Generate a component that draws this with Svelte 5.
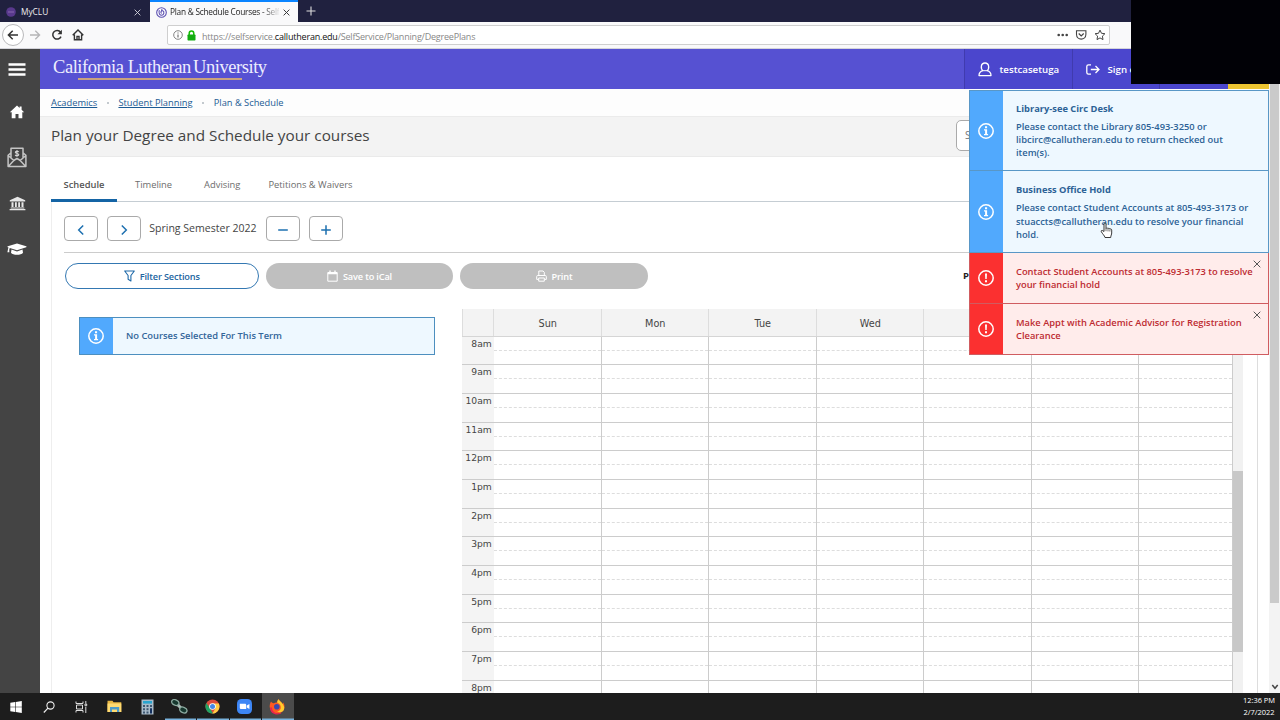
<script>
  const days = ['Sun', 'Mon', 'Tue', 'Wed', '', '', ''];
  const hours = ['8am', '9am', '10am', '11am', '12pm', '1pm', '2pm', '3pm', '4pm', '5pm', '6pm', '7pm', '8pm'];
  const notices = [
    { kind: 'info', height: 81, title: 'Library-see Circ Desk', lines: ['Please contact the Library 805-493-3250 or', 'libcirc@callutheran.edu to return checked out', 'item(s).'] },
    { kind: 'info', height: 82, title: 'Business Office Hold', lines: ['Please contact Student Accounts at 805-493-3173 or', 'stuaccts@callutheran.edu to resolve your financial', 'hold.'] },
    { kind: 'error', height: 51, lines: ['Contact Student Accounts at 805-493-3173 to resolve', 'your financial hold'] },
    { kind: 'error', height: 51, lines: ['Make Appt with Academic Advisor for Registration', 'Clearance'] }
  ];
</script>

{#snippet infoIcon()}
  <svg width="18" height="18" viewBox="0 0 18 18"><circle cx="9" cy="9" r="7.2" fill="none" stroke="#fff" stroke-width="1.5" /><path d="M8 4.3h2.1v2H8zM7 7.3h3.1v4.6h1v1.3H7v-1.3h1.1V8.6H7z" fill="#fff" /></svg>
{/snippet}
{#snippet errorIcon()}
  <svg width="18" height="18" viewBox="0 0 18 18"><circle cx="9" cy="9" r="7.2" fill="none" stroke="#fff" stroke-width="1.5" /><path d="M8 4.4h2l-.3 5.6H8.3zM8 11.2h2v2H8z" fill="#fff" /></svg>
{/snippet}
{#snippet cross(size, color, w)}
  <svg width={size} height={size} viewBox="0 0 8 8"><path d="M.7.7l6.6 6.6M7.3.7L.7 7.3" stroke={color} stroke-width={w} fill="none" /></svg>
{/snippet}

<div class="screen">
  <div class="tabbar">
    <div class="tab">
      <svg width="10" height="10" viewBox="0 0 10 10"><circle cx="5" cy="5" r="4.8" fill="#59398d" /><path d="M2 5h6" stroke="#8a69b0" /></svg>
      <span class="t1">MyCLU</span>
      {@render cross(7, '#d9d9e2', 1)}
    </div>
    <div class="tab active">
      <svg width="11" height="11" viewBox="0 0 11 11"><circle cx="5.5" cy="5.5" r="4.8" fill="#fff" stroke="#5b4fb0" stroke-width="1.1" /><path d="M3.3 3.2c-.9 3.3.4 5 2.4 5 2.3 0 3-3.6 1.1-4.4-1.5-.5-2.7 1.8-1.2 2.6M6 2.2l-.5 2" stroke="#5b4fb0" stroke-width="1.1" fill="none" /></svg>
      <span class="t2">Plan &amp; Schedule Courses - Self</span>
      {@render cross(7, '#333', 1.1)}
    </div>
    <svg class="plus" width="10" height="10" viewBox="0 0 10 10"><path d="M5 .5v9M.5 5h9" stroke="#ddd" stroke-width="1.1" /></svg>
  </div>

  <div class="toolbar">
    <div class="back"><svg width="12" height="12" viewBox="0 0 12 12"><path d="M11 6H1.5M5.7 1.7L1.4 6l4.3 4.3" stroke="#333" stroke-width="1.5" fill="none" /></svg></div>
    <svg class="fwd" width="12" height="12" viewBox="0 0 12 12"><path d="M1 6h9.5M6.3 1.7L10.6 6l-4.3 4.3" stroke="#b5b5b7" stroke-width="1.3" fill="none" /></svg>
    <svg class="reload" width="12" height="12" viewBox="0 0 12 12"><path d="M9.6 3.3A4.3 4.3 0 1 0 10 7.6" stroke="#333" stroke-width="1.5" fill="none" /><path d="M10.9.8v4.4H6.5z" fill="#333" /></svg>
    <svg class="homeb" width="12" height="12" viewBox="0 0 12 12"><path d="M.7 6.3L6 1l5.3 5.3M2.4 5.5v5.3h7.2V5.5M5 10.8V7.4h2v3.4" stroke="#333" stroke-width="1.4" fill="none" /></svg>
    <div class="urlbar">
      <svg width="10" height="10" viewBox="0 0 10 10"><circle cx="5" cy="5" r="4.3" fill="none" stroke="#777" stroke-width=".9" /><path d="M5 4.4v3M5 2.4v1.1" stroke="#666" stroke-width="1.1" /></svg>
      <svg class="lock" width="9" height="11" viewBox="0 0 9 11"><path d="M2.2 5V3.4a2.3 2.3 0 0 1 4.6 0V5" fill="none" stroke="#12bc00" stroke-width="1.5" /><rect x=".5" y="4.6" width="8" height="5.8" rx=".7" fill="#12ac10" /></svg>
      <span class="url">https://selfservice.<b>callutheran.edu</b>/SelfService/Planning/DegreePlans</span>
      <svg class="urlicons" width="48" height="12" viewBox="0 0 48 12"><g fill="#444"><circle cx="1.7" cy="6" r="1.3" /><circle cx="5.7" cy="6" r="1.3" /><circle cx="9.7" cy="6" r="1.3" /></g><path d="M19.5 1.7h9.4v3.6c0 6.4-9.4 6.4-9.4 0z" fill="none" stroke="#444" stroke-width="1.1" /><path d="M21.7 4.5l2.5 2.4 2.5-2.4" fill="none" stroke="#444" stroke-width="1.2" /><path d="M43 1.1l1.5 3.2 3.4.4-2.5 2.4.6 3.5-3-1.7-3 1.7.6-3.5-2.5-2.4 3.4-.4z" fill="none" stroke="#444" stroke-width="1" /></svg>
    </div>
  </div>

  <div class="page">
    <nav class="side">
      <svg width="18" height="14" viewBox="0 0 18 14"><path d="M.5 1.500h17M.5 6.500h17M.5 11.500h17" stroke="#fff" stroke-width="2.3" /></svg>
      <svg class="s1" width="16" height="14" viewBox="0 0 16 14"><path d="M8 .5L.8 7.2h1.9v6h3.8V9h3v4.2h3.8v-6h1.9l-2.6-2.4V1.4h-2v1.5z" fill="#fff" /></svg>
      <svg class="s2" width="20" height="21" viewBox="0 0 20 21"><path d="M4 11V1.2h12V11M4 5.8L1.1 8.3v11.2h17.8V8.3L16 5.8M1.4 8.8l5.4 4.7L10 11.4l3.2 2.1 5.4-4.7M1.5 19.2l5.3-5.7M18.5 19.2l-5.3-5.7" fill="none" stroke="#c4c4c4" stroke-width="1.5" stroke-linejoin="round" /><path d="M11.8 4.8c-1-.9-3.5-.8-3.5.5 0 1.600 3.500.7 3.500 2.300 0 1.400-2.700 1.400-3.700.4M10 3v6.700" fill="none" stroke="#d5d5d5" stroke-width="1.100" /></svg>
      <svg class="s3" width="17" height="15" viewBox="0 0 17 15"><path d="M8.500.8L.8 4.200v1.200h15.400V4.200zM2.500 6.300h2V11h-2zM6 6.300h1.800V11H6zM9.200 6.300H11V11H9.200zM12.500 6.300h2V11h-2zM1.700 11.500h13.600v.9H1.700zM.6 13h15.800v1.200H.6z" fill="#e8e8e8" /></svg>
      <svg class="s4" width="20" height="13" viewBox="0 0 20 13"><path d="M10 .4L.8 3.300c-.5.2-.5.8 0 1l.8.3C1 5.600 1 7 .4 9.200h2C2.200 7 2.300 6 2.800 5l7.200 2.200 9.200-2.900c.5-.2.5-.8 0-1zM4.500 6.600L4 9.800c1.800 2.700 10.200 2.700 12 0l-.5-3.200L10 8.400z" fill="#fff" /></svg>
    </nav>

    <div class="body">
      <header>
        <div class="logo"><span>California Lutheran <b>University</b></span><i></i></div>
        <div class="user">
          <svg width="14" height="15" viewBox="0 0 14 15"><path d="M5 8.700C2.500 7 2.500 1 7 1s4.500 6 2 7.700M5 8.700c-2.500.6-4 1.800-4 4.900h12c0-3.100-1.500-4.300-4-4.900" fill="none" stroke="#fff" stroke-width="1.300" stroke-linejoin="round" /><path d="M5 8.700h4" stroke="#fff" stroke-width="1" /></svg>
          <span>testcasetuga</span>
        </div>
        <div class="sign">
          <svg width="14" height="11" viewBox="0 0 14 11"><path d="M5 .8H2.500C1.300.8.800 1.400.800 2.500v6c0 1.100.5 1.700 1.700 1.700H5M4.800 5.500H13M9.500 2l3.500 3.500L9.500 9" fill="none" stroke="#fff" stroke-width="1.300" /></svg>
          <span>Sign out</span>
        </div>
        <div class="help"></div>
        <div class="alerts"></div>
      </header>

      <div class="crumbs"><u>Academics</u><em></em><u>Student Planning</u><em></em><span>Plan &amp; Schedule</span></div>
      <div class="title"><h1>Plan your Degree and Schedule your courses</h1><div class="search">S</div></div>

      <div class="tabs">
        <div class="on"><span>Schedule</span></div>
        <div class="tb2"><span>Timeline</span></div>
        <div class="tb3"><span>Advising</span></div>
        <div class="tb4"><span>Petitions &amp; Waivers</span></div>
      </div>

      <main>
        <div class="term">
          <button aria-label="Previous term"><svg width="8" height="12" viewBox="0 0 8 12"><path d="M6.200 1.500L1.700 6l4.500 4.500" /></svg></button>
          <button aria-label="Next term"><svg width="8" height="12" viewBox="0 0 8 12"><path d="M1.800 1.500L6.300 6l-4.500 4.500" /></svg></button>
          <span>Spring Semester 2022</span>
          <button aria-label="Remove term"><svg width="12" height="12" viewBox="0 0 12 12"><path d="M1.200 6h9.600" /></svg></button>
          <button aria-label="Add term"><svg width="12" height="12" viewBox="0 0 12 12"><path d="M1.200 6h9.600M6 1.200v9.600" /></svg></button>
        </div>
        <div class="actions">
          <div class="pill outline"><svg width="11" height="12" viewBox="0 0 11 12"><path d="M.7 1h9.600L6.900 5.500v5.400L4.100 9.300V5.500z" fill="none" stroke="#1d68a8" stroke-width="1.100" stroke-linejoin="round" /></svg><span>Filter Sections</span></div>
          <div class="pill grey g1"><svg width="11" height="12" viewBox="0 0 11 12"><path d="M.8 2.500h9.400v8.700H.8z" fill="none" stroke="#fff" stroke-width="1" /><path d="M.8 3.500h9.400M3 .5v2.700M8 .5v2.700" stroke="#fff" stroke-width="1.400" /></svg><span>Save to iCal</span></div>
          <div class="pill grey g2"><svg width="11" height="12" viewBox="0 0 11 12"><path d="M2.800 5.500V1h4.200l1.300 1.300v3.200M2.500 9.400H.7V6.500c0-.6.300-1 1-1h7.600c.7 0 1 .4 1 1v2.900H8.500M2.700 8h5.600v3.200H2.700z" fill="none" stroke="#fff" stroke-width="1" /></svg><span>Print</span></div>
          <strong>P</strong>
        </div>
        <div class="cols">
          <div class="none"><div class="ico">{@render infoIcon()}</div><span>No Courses Selected For This Term</span></div>
          <div class="cal">
            <div class="head"><div class="corner"></div>{#each days as d}<div class="day"><span>{d}</span></div>{/each}<div class="gut"></div></div>
            <div class="grid">
              <div class="rows">
                {#each hours as h}
                  <div class="row"><div class="hr"><span>{h}</span></div>{#each days as d}<div class="cell"><i></i></div>{/each}</div>
                {/each}
              </div>
              <div class="cscroll"><div></div></div>
            </div>
          </div>
        </div>
      </main>
    </div>
    <div class="pscroll"><div></div><svg width="8" height="6" viewBox="0 0 8 6"><path d="M1.300 1L4 4.300 6.700 1" fill="none" stroke="#444" stroke-width="1.500" /></svg></div>
  </div>

  <footer>
    <div class="app"><svg width="12" height="12" viewBox="0 0 12 12"><path d="M.3 1.800L5.200 1v4.700H.3zM5.800.9L11.800 0v5.700h-6zM.3 6.300h4.900V11L.3 10.200zM5.800 6.300h6V12l-6-.9z" fill="#fff" /></svg></div>
    <div class="app"><svg width="12" height="12" viewBox="0 0 12 12"><circle cx="7.500" cy="4.500" r="3.600" fill="none" stroke="#eee" stroke-width="1.100" /><path d="M5 7.200L.8 11.500" stroke="#eee" stroke-width="1.200" /></svg></div>
    <div class="app"><svg width="13" height="12" viewBox="0 0 13 12"><path d="M1 .5v2h7v-2M1 11.500v-2h7v2M1.500 4h6v4h-6zM10.800 0v2.500M10.800 6v6M10 3h1.700v1.800H10z" fill="none" stroke="#ddd" stroke-width="1" /></svg></div>
    <div class="app"><svg width="15" height="13" viewBox="0 0 15 13"><path d="M.5.8h5l1 1.500h7.800V12H.5z" fill="#e9b844" /><path d="M.5 3.500h13.800V12H.5z" fill="#ffdb72" /><path d="M3 7h9.200v5H10V9.500H5V12H3z" fill="#4d9ccb" /></svg></div>
    <div class="app"><svg width="13" height="16" viewBox="0 0 13 16"><path d="M.5.5h12v15H.5z" fill="#a9bac8" /><path d="M2 2h9v2.600H2z" fill="#29a4ce" /><path d="M2 6h2v2H2zM5.500 6h2v2h-2zM2 9.300h2v2H2zM5.500 9.300h2v2h-2zM2 12.500h2v2H2zM5.500 12.500h2v2h-2zM9 6h2v2H9z" fill="#3d5770" /><path d="M9 9.300h2v5.200H9z" fill="#15315f" /></svg></div>
    <div class="app run"><svg width="17" height="15" viewBox="0 0 17 15"><path d="M4.500 3.500l8 8" stroke="#aebdb8" stroke-width="3" /><ellipse cx="4.300" cy="3.500" rx="3.800" ry="2.700" transform="rotate(25 4.300 3.500)" fill="#17382e" stroke="#8caaa0" stroke-width="1.300" /><ellipse cx="12.300" cy="11" rx="3.800" ry="2.700" transform="rotate(25 12.300 11)" fill="#17382e" stroke="#8caaa0" stroke-width="1.300" /></svg></div>
    <div class="app run"><svg width="15" height="15" viewBox="0 0 15 15"><circle cx="7.500" cy="7.500" r="7" fill="#dd4b3e" /><path d="M1.400 4L5 9.200l3 5.300A7 7 0 0 1 1.400 4z" fill="#20a363" /><path d="M7.500 4.500h6.300A7 7 0 0 1 7.400 14.500l3-5z" fill="#ffcd45" /><circle cx="7.500" cy="7.500" r="3.300" fill="#fff" /><circle cx="7.500" cy="7.500" r="2.500" fill="#4587e8" /></svg></div>
    <div class="app run"><svg width="15" height="15" viewBox="0 0 15 15"><rect width="15" height="15" rx="4.500" fill="#3d86f5" /><path d="M2.800 4.700h5c.8 0 1.400.5 1.400 1.300v4H4.300c-.9 0-1.500-.5-1.500-1.300zM9.800 6.600l2.600-1.700v5.200L9.800 8.500z" fill="#fff" /></svg></div>
    <div class="app run cur"><svg width="16" height="16" viewBox="0 0 16 16"><path d="M2 2.500c-1.300 2.500-1.600 4.600-1 7A7.500 7.500 0 0 0 15.500 8c0-2-.5-3.600-1.600-4.700.2.700.2 1.300 0 1.900C13 3.200 10.500 2.700 9.800.3c-1.400 1-1.700 2.300-1.500 3.400-1.500-.3-2.400 0-3.200.6C4 4.200 2.600 3.700 2 2.500z" fill="#ff5a20" /><path d="M9.800.3c-1.400 1-1.700 2.300-1.500 3.400 2.500.8 3.900 3 3.500 5.500-.4 2-2 3.200-3.800 3.200 2 1.400 5 1 6.500-1 1.100-2 1.200-3.300-.6-6.200C13 3.200 10.500 2.700 9.800.3z" fill="#ffcb2d" /><path d="M1 8.500c0 5 4 7 7 7 2.500 0 4-.8 5-2-5 2-10 0-10-5z" fill="#e8244f" /><circle cx="7.800" cy="7.800" r="2.800" fill="#3b49ae" /></svg></div>
    <div class="clock"><span>12:36 PM</span><span>2/7/2022</span></div>
  </footer>

  <div class="notices">
    {#each notices as n}
      <div class="notice {n.kind}" style="height:{n.height}px">
        <div class="ico">{#if n.kind === 'info'}{@render infoIcon()}{:else}{@render errorIcon()}{/if}</div>
        <div class="msg">
          {#if n.title}<h2>{n.title}</h2>{/if}
          {#each n.lines as l}<p>{l}</p>{/each}
        </div>
        {#if n.kind === 'error'}<div class="close">{@render cross(8, '#555', 1)}</div>{/if}
      </div>
    {/each}
  </div>
  <svg class="hand" width="13" height="17" viewBox="0 0 13 17"><path d="M4 9.500V2c0-1.500 2-1.500 2 0v4.500c.3-.8 1.800-.7 2 .2.500-.7 1.700-.4 1.900.4.700-.5 1.800-.1 1.800 1V11c0 1.500-.9 2.500-1 4.500H5C4.500 13.500 2.500 12 1.300 9.700.8 8.500 2 8 2.900 8.800z" fill="#fff" stroke="#222" stroke-width=".9" /><path d="M6 6.500v2.700M8 7v2.400M9.900 7.500v2" stroke="#333" stroke-width=".7" /></svg>
  <div class="cover"></div>
</div>

<style>
  :global(body) { margin: 0; overflow: hidden; }
  .screen, .screen * { box-sizing: border-box; }
  .screen { width: 1280px; height: 720px; position: relative; overflow: hidden; display: flex; flex-direction: column; background: #fff; font-family: "Open Sans", sans-serif; color: #444; white-space: nowrap; }
  svg { display: block; flex: none; }
  .tabbar { height: 22px; background: #20213f; display: flex; flex: none; align-items: center; }
  .tab { width: 150px; height: 22px; padding: 2px 9px 0 6px; display: flex; align-items: center; font-size: 8.300px; color: #eee; }
  .tab span { margin-left: 5px; flex: 1; line-height: 16px; }
  .tab.active { background: #f9f9fa; border-top: 2px solid #0a84ff; color: #222; padding: 0 8px 0 6px; width: 148px; }
  .tab .t2 { -webkit-mask-image: linear-gradient(90deg, #000 84%, transparent 102%); margin-left: 3px; margin-right: 4px; letter-spacing: -.25px; }
  .plus { margin-left: 8px; }
  .toolbar { height: 27px; background: #f9f9fa; display: flex; flex: none; align-items: center; border-bottom: 1px solid #d4d4da; padding-left: 2px; }
  .back { width: 22px; height: 22px; border: 1px solid #b9b9bb; border-radius: 50%; display: grid; place-items: center; background: #fff; }
  .fwd { margin-left: 5px; }
  .reload { margin-left: 10px; }
  .homeb { margin-left: 9px; }
  .urlbar { margin-left: 83px; width: 943px; height: 20px; border: 1px solid #cfcfcf; border-radius: 2px; background: #fff; display: flex; align-items: center; padding: 0 4px 0 5px; }
  .lock { margin-left: 4px; }
  .url { margin-left: 6px; margin-top: 2px; font-size: 9px; letter-spacing: -.2px; color: #888; flex: 1; }
  .url b { font-weight: 400; color: #111; }
  .page { flex: 1; min-height: 0; display: flex; }
  .side { width: 40px; background: #444; display: flex; flex-direction: column; align-items: center; padding: 14px 6px 0 0; flex: none; }
  .s1 { margin-top: 28px; } .s2 { margin-top: 28px; } .s3 { margin-top: 28px; } .s4 { margin-top: 32px; }
  .body { width: 1229px; display: flex; flex-direction: column; min-height: 0; flex: none; }
  header { height: 40px; background: #5651d2; display: flex; flex: none; color: #fff; font-size: 9.700px; font-weight: 600; }
  .logo { width: 924px; padding: 6px 0 0 13px; }
  .logo span { display: block; font-family: "Liberation Serif", serif; font-weight: 400; font-size: 18.500px; line-height: 25px; height: 23px; color: #eeeefe; letter-spacing: -.45px; }
  .logo b { font-weight: 400; margin-left: -2px; }
  .logo i { display: block; width: 164px; height: 1.500px; background: #c9a27e; margin-left: 25px; }
  .user, .sign, .help { background: #4b46cd; border-left: 1px solid #403bae; display: flex; align-items: center; }
  .user { width: 108px; padding-left: 13px; } .user span { margin-left: 7.500px; }
  .sign { width: 87px; padding-left: 13px; } .sign span { margin-left: 7.500px; }
  .help { width: 69px; } .alerts { flex: 1; background: #ecc430; }
  .crumbs { height: 27px; background: #fdfdfd; display: flex; align-items: center; flex: none; padding-left: 11px; font-size: 9.300px; color: #1c5b94; }
  .crumbs em { width: 2px; height: 2px; background: #c3c9ce; margin: 0 9.600px; }
  .title { height: 41px; background: #f3f3f3; border-top: 1px solid #ebebeb; border-bottom: 1px solid #eaeaea; display: flex; align-items: center; justify-content: space-between; flex: none; padding: 0 13px 2px 11px; }
  h1 { margin: 0 0 2px; font-size: 15.300px; font-weight: 400; color: #444; }
  .search { width: 300px; height: 31px; border: 1px solid #aaa; border-radius: 5px; background: #fff; padding: 7px 8px; font-size: 10px; color: #777; }
  .tabs { height: 45px; margin: 0 11px 0 11px; border-bottom: 1px solid #c5cdd3; display: flex; flex: none; font-size: 9.350px; color: #6d6d6d; }
  .tabs div { height: 45px; padding-top: 21px; }
  .on { width: 66px; border-bottom: 3px solid #1464a5; text-align: center; font-weight: 600; color: #555; }
  .tb2 { margin-left: 18px; } .tb3 { margin-left: 32px; } .tb4 { margin-left: 28px; }
  main { flex: 1; min-height: 0; margin: 0 11px; border-left: 1px solid #eee; border-right: 1px solid #ddd; padding: 14px 13px 0 12.500px; display: flex; flex-direction: column; }
  .term { display: flex; align-items: center; height: 37px; padding-bottom: 11px; border-bottom: 1px solid #ccc; flex: none; font-size: 10.560px; color: #444; margin-left: -.5px; }
  .term button { width: 34px; height: 25px; border: 1px solid #aaa; border-radius: 4px; background: #fff; display: grid; place-items: center; padding: 2px 0 0; margin-right: 8.600px; flex: none; }
  .term button path { fill: none; stroke: #1d70b0; stroke-width: 1.500; }
  .term span { width: 108px; margin-right: 9px; line-height: 16px; margin-top: -1px; }
  .actions { display: flex; margin-top: 10px; height: 26px; flex: none; font-size: 10px; }
  .pill { height: 26px; border-radius: 13px; display: flex; align-items: center; justify-content: center; gap: 5px; }
  .pill span { font-weight: 600; font-size: 9.200px; letter-spacing: -.15px; }
  .outline { width: 194.500px; border: 1px solid #3478b2; color: #23659f; }
  .grey { background: #bfbfbf; color: #fff; } .g1 { width: 187px; margin-left: 7px; } .g2 { width: 188px; margin-left: 7px; }
  .actions strong { margin: 6px 0 0 315px; color: #222; font-size: 9.500px; }
  .cols { flex: 1; min-height: 0; display: flex; margin-top: 20px; }
  .none { width: 356px; height: 38px; margin: 8px 27px 0 14.500px; border: 1px solid #4d8fbf; background: #eef8ff; display: flex; flex: none; align-items: center; color: #33669a; font-size: 9.350px; font-weight: 600; }
  .ico { width: 33px; align-self: stretch; display: grid; place-items: center; background: #51a9fd; flex: none; margin-right: 13px; }
  .none .ico { padding-right: 1px; }
  .none span { margin-top: -1px; }
  .cal { width: 781px; flex: none; display: flex; flex-direction: column; font-family: "DejaVu Sans", Verdana, sans-serif; font-size: 9.700px; color: #444; }
  .head { height: 28px; background: #f3f3f3; border-bottom: 1px solid #d5d5d5; display: flex; flex: none; }
  .corner { width: 32px; border: solid #ddd; border-width: 0 1px; flex: none; }
  .day { flex: 0 0 107.500px; border-right: 1px solid #ddd; text-align: center; line-height: 29px; padding-left: 1px; }
  .day:nth-child(8), .cell:last-child { flex: 1 1 0; }
  .gut { width: 10px; }
  .grid { flex: 1; min-height: 0; display: flex; overflow: hidden; }
  .rows { flex: 1; }
  .row { height: 28.670px; border-bottom: 1px solid #ccc; display: flex; }
  .row:first-child { height: 28.300px; }
  .hr { width: 32.300px; background: #f4f4f4; text-align: right; padding-right: 2.500px; line-height: 14px; flex: none; font-size: 9.200px; }
  .cell { flex: 0 0 107.500px; border-right: 1px solid #ccc; height: 100%; }
  .cell i { display: block; height: 14px; border-bottom: 1px dashed #ddd; }
  .cscroll { width: 10px; background: #f1f1f1; padding-top: 134px; flex: none; } .cscroll div { height: 181px; background: #c8c8c8; }
  .pscroll { width: 11px; background: #f3f3f3; display: flex; flex-direction: column; align-items: center; justify-content: space-between; padding-bottom: 3px; }
  .pscroll div { width: 9px; height: 554px; background: #cacaca; }
  footer { height: 27px; flex: none; background: #1d1d1d; display: flex; color: #fff; padding-left: .7px; }
  .app { width: 32.800px; display: grid; place-items: center; border-right: 1px solid transparent; padding-right: 1px; }
  .run { box-shadow: inset 0 -1.500px #79b3de; border-right-color: #1d1d1d; width: 32.500px; }
  .cur { background: #4b4b4b; }
  .clock { margin-left: auto; width: 42px; display: flex; flex-direction: column; font-size: 7.500px; letter-spacing: -.05px; line-height: 12px; padding: 1px 0 0; align-items: center; }
  .notices { position: absolute; left: 969px; top: 90px; width: 300px; }
  .notice { display: flex; align-items: center; position: relative; border: 1px solid #5997c6; border-top-width: 0; background: #eef8ff; color: #2c6296; }
  .notice:first-child { border-top-width: 1px; }
  .notice .ico { width: 32.500px; margin-right: 13.500px; }
  .error { background: #ffeceb; border-color: #d05c60; color: #bd2b31; } .error .ico { background: #fb3030; }
  .notice:nth-child(2) .msg { padding-top: 1.500px; }
  h2 { margin: 0 0 5px; font-size: 9.300px; line-height: 13px; font-weight: 700; }
  p { margin: 0; font-size: 9.330px; line-height: 13.200px; font-weight: 600; }
  .close { position: absolute; right: 7px; top: 7px; }
  .hand { position: absolute; left: 1100px; top: 222px; }
  .cover { position: absolute; left: 1131px; top: 0; width: 149px; height: 84px; background: #010106; }
</style>
